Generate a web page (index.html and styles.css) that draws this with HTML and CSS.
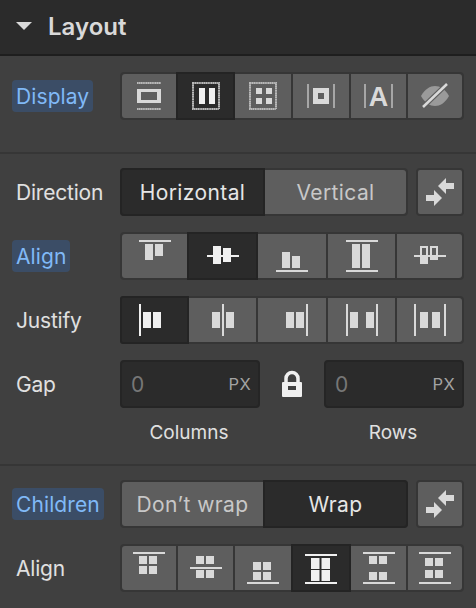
FILE: index.html
```html
<!DOCTYPE html>
<html lang="en">
<head>
<meta charset="utf-8">
<title>Layout</title>
<link rel="stylesheet" href="styles.css">
</head>
<body>
<div class="panel">
  <header class="head">
    <svg class="caret" width="16" height="8" viewBox="0 0 16 8"><path d="M0 0H16L8 8Z"/></svg>
    <span class="title">Layout</span>
  </header>

  <section class="sec sec-a">
    <div class="row">
      <span class="lab hl">Display</span>
      <div class="grp six">
        <button class="btn"><svg class="ic" viewBox="0 0 32 32"><path class="dot" d="M4 3H28M4 29H28"/><path fill-rule="evenodd" d="M4 9H28V23H4ZM8 12V20H24V12Z"/></svg></button>
        <button class="btn on"><svg class="ic" viewBox="0 0 32 32"><rect class="dot box" x="3" y="3" width="26" height="26"/><rect x="9" y="8" width="6" height="16"/><rect x="19" y="8" width="6" height="16"/></svg></button>
        <button class="btn"><svg class="ic" viewBox="0 0 32 32"><rect class="dot box" x="3" y="3" width="26" height="26"/><rect x="9" y="8" width="6" height="6"/><rect x="19" y="8" width="6" height="6"/><rect x="9" y="18" width="6" height="6"/><rect x="19" y="18" width="6" height="6"/></svg></button>
        <button class="btn"><svg class="ic" viewBox="0 0 32 32"><rect class="dim" x="2" y="4" width="2" height="24"/><rect class="dim" x="28" y="4" width="2" height="24"/><path fill-rule="evenodd" d="M8 8H24V24H8ZM13 13V19H19V13Z"/></svg></button>
        <button class="btn"><svg class="ic" viewBox="0 0 32 32"><rect class="dim" x="1" y="4" width="2" height="24"/><rect class="dim" x="28" y="4" width="2" height="24"/><text class="glyph" x="15.5" y="26" text-anchor="middle">A</text></svg></button>
        <button class="btn"><svg class="ic" viewBox="0 0 32 32"><path class="eye" d="M2 16C6 9 11 6 16 6C21 6 26 9 30 16C26 23 21 26 16 26C11 26 6 23 2 16Z"/><path class="halo" d="M4 27L28 4"/><path class="slash" d="M4 27L28 4"/></svg></button>
      </div>
    </div>
  </section>

  <section class="sec sec-b">
    <div class="row">
      <span class="lab">Direction</span>
      <div class="with-swap">
        <div class="seg">
          <div class="opt on">Horizontal</div>
          <div class="opt">Vertical</div>
        </div>
        <button class="swap"><svg class="ic" viewBox="0 0 32 32"><path d="M14 10L22 2V7H30V13H22V18Z"/><path d="M18 22L10 14V19H2V25H10V30Z"/></svg></button>
      </div>
    </div>

    <div class="row">
      <span class="lab hl">Align</span>
      <div class="grp five">
        <button class="btn"><svg class="ic" viewBox="0 0 32 32"><rect y="0" width="32" height="2"/><rect x="6" y="4" width="8" height="16"/><rect x="16" y="4" width="8" height="12"/></svg></button>
        <button class="btn on"><svg class="ic" viewBox="0 0 32 32"><rect y="15" width="32" height="2"/><rect x="6" y="6" width="8" height="18"/><rect x="16" y="8" width="8" height="14"/></svg></button>
        <button class="btn"><svg class="ic" viewBox="0 0 32 32"><rect y="30" width="32" height="2"/><rect x="6" y="12" width="8" height="16"/><rect x="16" y="16" width="8" height="12"/></svg></button>
        <button class="btn"><svg class="ic" viewBox="0 0 32 32"><rect y="0" width="32" height="2"/><rect y="30" width="32" height="2"/><rect x="6" y="4" width="8" height="24"/><rect x="16" y="4" width="8" height="24"/></svg></button>
        <button class="btn"><svg class="ic" viewBox="0 0 32 32"><rect y="15" width="32" height="2"/><path fill-rule="evenodd" d="M6 6H14V24H6ZM8 8V15H12V8Z"/><path fill-rule="evenodd" d="M16 6H24V20H16ZM18 8V15H22V8Z"/></svg></button>
      </div>
    </div>

    <div class="row">
      <span class="lab">Justify</span>
      <div class="grp five">
        <button class="btn on"><svg class="ic" viewBox="0 0 32 32"><rect x="0" width="2" height="32"/><rect x="4" y="8" width="8" height="16"/><rect x="14" y="8" width="8" height="16"/></svg></button>
        <button class="btn"><svg class="ic" viewBox="0 0 32 32"><rect x="15" width="2" height="32"/><rect x="5" y="8" width="8" height="16"/><rect x="19" y="8" width="8" height="16"/></svg></button>
        <button class="btn"><svg class="ic" viewBox="0 0 32 32"><rect x="30" width="2" height="32"/><rect x="10" y="8" width="8" height="16"/><rect x="20" y="8" width="8" height="16"/></svg></button>
        <button class="btn"><svg class="ic" viewBox="0 0 32 32"><rect x="0" width="2" height="32"/><rect x="30" width="2" height="32"/><rect x="4" y="8" width="8" height="16"/><rect x="20" y="8" width="8" height="16"/></svg></button>
        <button class="btn"><svg class="ic" viewBox="0 0 32 32"><rect x="0" width="2" height="32"/><rect x="30" width="2" height="32"/><rect x="6" y="8" width="8" height="16"/><rect x="18" y="8" width="8" height="16"/></svg></button>
      </div>
    </div>

    <div class="row">
      <span class="lab">Gap</span>
      <div class="gap">
        <div class="field"><span class="val">0</span><span class="unit">PX</span></div>
        <svg class="lock" width="24" height="28" viewBox="0 0 24 28"><path class="shackle" d="M6 14V8.500A6 6 0 0 1 18 8.500V14"/><path fill-rule="evenodd" d="M3 12H21Q22 12 22 13V26Q22 27 21 27H3Q2 27 2 26V13Q2 12 3 12ZM8 16V20H16V16Z"/></svg>
        <div class="field"><span class="val">0</span><span class="unit">PX</span></div>
        <span class="cap">Columns</span>
        <span></span>
        <span class="cap">Rows</span>
      </div>
    </div>
  </section>

  <section class="sec sec-c">
    <div class="row">
      <span class="lab hl">Children</span>
      <div class="with-swap">
        <div class="seg seg-wrap">
          <div class="opt">Don’t wrap</div>
          <div class="opt on">Wrap</div>
        </div>
        <button class="swap"><svg class="ic" viewBox="0 0 32 32"><path d="M14 10L22 2V7H30V13H22V18Z"/><path d="M18 22L10 14V19H2V25H10V30Z"/></svg></button>
      </div>
    </div>

    <div class="row">
      <span class="lab">Align</span>
      <div class="grp six">
        <button class="btn"><svg class="ic" viewBox="0 0 32 32"><rect y="0" width="32" height="2"/><rect x="6" y="4" width="8" height="8"/><rect x="16" y="4" width="8" height="8"/><rect x="6" y="14" width="8" height="8"/><rect x="16" y="14" width="8" height="8"/></svg></button>
        <button class="btn"><svg class="ic" viewBox="0 0 32 32"><rect y="15" width="32" height="2"/><rect x="6" y="4" width="8" height="8"/><rect x="16" y="4" width="8" height="8"/><rect x="6" y="18" width="8" height="8"/><rect x="16" y="18" width="8" height="8"/></svg></button>
        <button class="btn"><svg class="ic" viewBox="0 0 32 32"><rect y="30" width="32" height="2"/><rect x="6" y="10" width="8" height="8"/><rect x="16" y="10" width="8" height="8"/><rect x="6" y="20" width="8" height="8"/><rect x="16" y="20" width="8" height="8"/></svg></button>
        <button class="btn on"><svg class="ic" viewBox="0 0 32 32"><rect y="2" width="32" height="2"/><rect y="30" width="32" height="2"/><rect x="6" y="6" width="8.500" height="11"/><rect x="16.500" y="6" width="8.500" height="11"/><rect x="6" y="18" width="8.500" height="11"/><rect x="16.500" y="18" width="8.500" height="11"/></svg></button>
        <button class="btn"><svg class="ic" viewBox="0 0 32 32"><rect y="0" width="32" height="2"/><rect y="30" width="32" height="2"/><rect x="6" y="4" width="8" height="8"/><rect x="16" y="4" width="8" height="8"/><rect x="6" y="20" width="8" height="8"/><rect x="16" y="20" width="8" height="8"/></svg></button>
        <button class="btn"><svg class="ic" viewBox="0 0 32 32"><rect y="0" width="32" height="2"/><rect y="30" width="32" height="2"/><rect x="6" y="6" width="8" height="8"/><rect x="16" y="6" width="8" height="8"/><rect x="6" y="18" width="8" height="8"/><rect x="16" y="18" width="8" height="8"/></svg></button>
      </div>
    </div>
  </section>
</div>
</body>
</html>
```

FILE: styles.css
```css
* { box-sizing: border-box; }
html, body { margin: 0; padding: 0; }
body {
  width: 476px;
  height: 608px;
  overflow: hidden;
  background: #404040;
  font-family: Inter, "Liberation Sans", sans-serif;
  font-size: 21px;
  color: #e0e0e0;
}
.panel { display: flex; flex-direction: column; }

.head {
  height: 56px;
  display: flex;
  align-items: center;
  gap: 16px;
  padding: 0 0 2px 16px;
  background: #2b2b2b;
  border-bottom: 2px solid #1e1e1e;
}
.caret { fill: #d9d9d9; }
.title { font-size: 24px; font-weight: 600; color: #d9d9d9; }

.sec { display: flex; flex-direction: column; gap: 16px; padding: 14px 12px 0 16px; }
.sec-a { padding-top: 16px; height: 98px; border-bottom: 2px solid #363636; }
.sec-b { height: 312px; border-bottom: 2px solid #363636; }
.sec-c { height: 142px; }

.row { display: grid; grid-template-columns: 104px 1fr; align-items: start; }
.lab { height: 48px; line-height: 50px; color: #e0e0e0; justify-self: start; letter-spacing: -0.2px; }
.lab.hl {
  margin: 8px 0 0 -4px;
  padding: 0 4px;
  height: 32px;
  line-height: 33px;
  border-radius: 4px;
  background: #3b4d66;
  color: #80b9f7;
  letter-spacing: 0.1px;
}

.grp {
  display: grid;
  gap: 2px;
  height: 48px;
  padding: 2px;
  border-radius: 4px;
  background: #363636;
}
.six { grid-template-columns: 54px 55px 56px 56px 55px 54px; }
.five { grid-template-columns: 65px 67px 68px 67px 65px; }

.btn, .swap {
  display: flex;
  align-items: center;
  justify-content: center;
  padding: 0;
  border: 0;
  background: #5e5e5e;
  color: #d9d9d9;
}
.btn { min-width: 0; }
.btn:first-child { border-radius: 3px 0 0 3px; }
.btn:last-child { border-radius: 0 3px 3px 0; }
.btn.on {
  margin: -2px;
  border: 2px solid #242424;
  background: #2b2b2b;
  color: #f0f0f0;
  position: relative;
}
.ic { width: 32px; height: 32px; flex: none; fill: currentColor; }
.dot { fill: none; stroke: #b8b8b8; stroke-width: 2; stroke-dasharray: 1.5 0.300; }
.dim { fill: #a6a6a6; }
.glyph { font-size: 27px; font-weight: 600; fill: #d9d9d9; }
.eye { fill: #9a9a9a; }
.halo { fill: none; stroke: #5e5e5e; stroke-width: 5; }
.slash { fill: none; stroke: #d9d9d9; stroke-width: 2.500; }

.with-swap { display: grid; grid-template-columns: 288px 48px; gap: 8px; }
.seg {
  display: grid;
  grid-template-columns: 143px 141px;
  height: 48px;
  padding: 2px;
  border-radius: 4px;
  background: #363636;
}
.seg-wrap { grid-template-columns: 141px 143px; }
.opt {
  display: flex;
  align-items: center;
  justify-content: center;
  background: #5e5e5e;
  color: #c8c8c8;
  letter-spacing: 0.4px;
}
.opt:first-child { border-radius: 3px 0 0 3px; }
.opt:last-child { border-radius: 0 3px 3px 0; }
.opt.on { margin: -2px; border: 2px solid #242424; border-radius: 4px; background: #2b2b2b; color: #e6e6e6; position: relative; }
.opt.on:first-child { margin-right: 0; border-radius: 4px 0 0 4px; }
.opt.on:last-child { margin-left: 0; border-radius: 0 4px 4px 0; }
.swap { height: 48px; border: 2px solid #363636; border-radius: 4px; }

.gap { display: grid; grid-template-columns: 140px 64px 140px; align-items: center; }
.field {
  display: flex;
  align-items: center;
  justify-content: space-between;
  height: 48px;
  padding: 0 7px 0 9px;
  border: 2px solid #252525;
  border-radius: 4px;
  background: #2b2b2b;
}
.val { color: #777; }
.unit { font-size: 16.500px; color: #a3a3a3; letter-spacing: 0.3px; }
.lock { justify-self: center; fill: #f0f0f0; }
.shackle { fill: none; stroke: #f0f0f0; stroke-width: 3.500; }
.cap { height: 48px; padding-right: 2px; text-align: center; font-size: 19px; line-height: 50px; color: #e0e0e0; }
```
